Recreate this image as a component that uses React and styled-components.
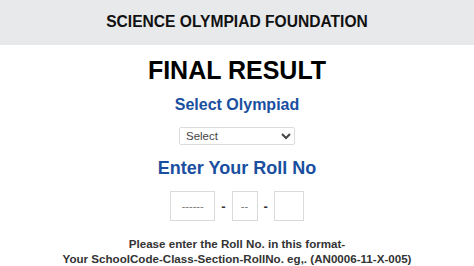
import React, { useState } from "react";
import styled, { createGlobalStyle } from "styled-components";

const GlobalStyle = createGlobalStyle`
  html, body {
    margin: 0;
    padding: 0;
    background: #ffffff;
    font-family: "Liberation Sans", Arial, sans-serif;
  }
`;

const Page = styled.div`
  width: 474px;
  height: 266px;
  overflow: hidden;
  display: flex;
  flex-direction: column;
  align-items: center;
`;

const Header = styled.header`
  width: 100%;
  height: 46px;
  background: #e8e9eb;
  display: flex;
  align-items: center;
  justify-content: center;
`;

const HeaderTitle = styled.h2`
  margin: 0;
  font-size: 15.6px;
  font-weight: 700;
  color: #111111;
`;

const MainTitle = styled.h1`
  margin: 10px 0 0;
  font-size: 25px;
  line-height: 30px;
  font-weight: 700;
  color: #000000;
`;

const SubTitle = styled.h3`
  margin: ${(p) => p.$top}px 0 0;
  font-size: ${(p) => p.$size}px;
  line-height: 20px;
  font-weight: 700;
  color: #1a4fa0;
`;

const SelectBox = styled.select`
  margin-top: 12px;
  width: 116px;
  height: 19px;
  padding: 0 2px;
  font-family: "Liberation Sans", Arial, sans-serif;
  font-size: 11.5px;
  color: #444444;
  background: #ffffff;
  border: 1px solid #dcdcdc;
  border-radius: 2px;
  outline: none;
`;

const RollRow = styled.div`
  margin-top: 13px;
  display: flex;
  align-items: center;
  gap: 6px;
`;

const RollInput = styled.input`
  box-sizing: border-box;
  width: ${(p) => p.$w}px;
  height: 30px;
  border: 1px solid #dadada;
  background: #ffffff;
  text-align: center;
  font-family: "Liberation Sans", Arial, sans-serif;
  font-size: 11px;
  color: #333333;
  outline: none;

  &::placeholder {
    color: #777777;
  }
`;

const Dash = styled.span`
  font-size: 13px;
  font-weight: 700;
  color: #333333;
`;

const Hint = styled.p`
  margin: 15px 0 0;
  font-size: 11.6px;
  line-height: 15px;
  font-weight: 700;
  color: #333333;
  text-align: center;
`;

export default function App() {
  const [olympiad, setOlympiad] = useState("");

  return (
    <>
      <GlobalStyle />
      <Page>
        <Header>
          <HeaderTitle>SCIENCE OLYMPIAD FOUNDATION</HeaderTitle>
        </Header>

        <MainTitle>FINAL RESULT</MainTitle>

        <SubTitle $top={10} $size={16}>Select Olympiad</SubTitle>
        <SelectBox value={olympiad} onChange={(e) => setOlympiad(e.target.value)}>
          <option value="">Select</option>
          <option value="nso">NSO</option>
          <option value="imo">IMO</option>
          <option value="ieo">IEO</option>
        </SelectBox>

        <SubTitle $top={13} $size={18}>Enter Your Roll No</SubTitle>
        <RollRow>
          <RollInput $w={45} placeholder="------" />
          <Dash>-</Dash>
          <RollInput $w={26} placeholder="--" />
          <Dash>-</Dash>
          <RollInput $w={30} />
        </RollRow>

        <Hint>
          Please enter the Roll No. in this format-
          <br />
          Your SchoolCode-Class-Section-RollNo. eg,. (AN0006-11-X-005)
        </Hint>
      </Page>
    </>
  );
}
